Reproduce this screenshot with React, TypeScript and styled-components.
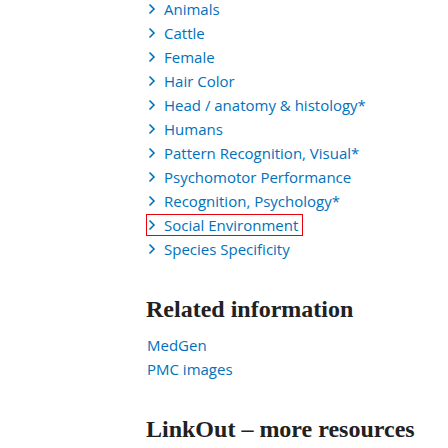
import React from "react";
import styled, { createGlobalStyle } from "styled-components";

const Global = createGlobalStyle`
  html, body { margin: 0; padding: 0; background: #fff; }
  body { font-family: "Open Sans", "Liberation Sans", sans-serif; }
`;

const Page = styled.div`
  padding-left: 146px;
  margin-top: -3px;
`;

const TermList = styled.ul`
  list-style: none;
  margin: 0;
  padding: 0;
  display: flex;
  flex-direction: column;
`;

const TermItem = styled.li`
  height: 24px;
  display: flex;
  align-items: center;
`;

const TermButton = styled.a<{ $focused?: boolean }>`
  display: inline-flex;
  align-items: center;
  gap: 8px;
  height: 22px;
  padding: 0 4px 0 1px;
  box-sizing: border-box;
  border: 1px solid ${(p) => (p.$focused ? "#e8000b" : "transparent")};
  color: #0071bc;
  font-size: 15px;
  text-decoration: none;
  white-space: nowrap;
`;

const Chevron = styled.svg`
  width: 8px;
  height: 12px;
  flex: none;
`;

const Section = styled.section`
  margin-top: 34px;
`;

const Heading = styled.h2`
  margin: 0 0 10px;
  font-family: "Liberation Serif", "DejaVu Serif", serif;
  font-weight: 700;
  font-size: 24px;
  color: #212121;
  line-height: 28px;
`;

const LinkList = styled.ul`
  list-style: none;
  margin: 0;
  padding: 0 0 0 1px;
`;

const LinkItem = styled.li`
  height: 24px;
  display: flex;
  align-items: center;
  a {
    color: #0071bc;
    font-size: 15px;
    text-decoration: none;
  }
`;

const terms = [
  "Animals",
  "Cattle",
  "Female",
  "Hair Color",
  "Head / anatomy & histology*",
  "Humans",
  "Pattern Recognition, Visual*",
  "Psychomotor Performance",
  "Recognition, Psychology*",
  "Social Environment",
  "Species Specificity",
];

export default function App() {
  return (
    <>
      <Global />
      <Page>
        <TermList>
          {terms.map((t) => (
            <TermItem key={t}>
              <TermButton href="#" $focused={t === "Social Environment"}>
                <Chevron viewBox="0 0 8 12">
                  <path d="M1.5 1.5 L6 6 L1.5 10.5" fill="none" stroke="#0071bc" strokeWidth="1.6" />
                </Chevron>
                {t}
              </TermButton>
            </TermItem>
          ))}
        </TermList>
        <Section>
          <Heading>Related information</Heading>
          <LinkList>
            <LinkItem><a href="#">MedGen</a></LinkItem>
            <LinkItem><a href="#">PMC images</a></LinkItem>
          </LinkList>
        </Section>
        <Section>
          <Heading>LinkOut – more resources</Heading>
        </Section>
      </Page>
    </>
  );
}
